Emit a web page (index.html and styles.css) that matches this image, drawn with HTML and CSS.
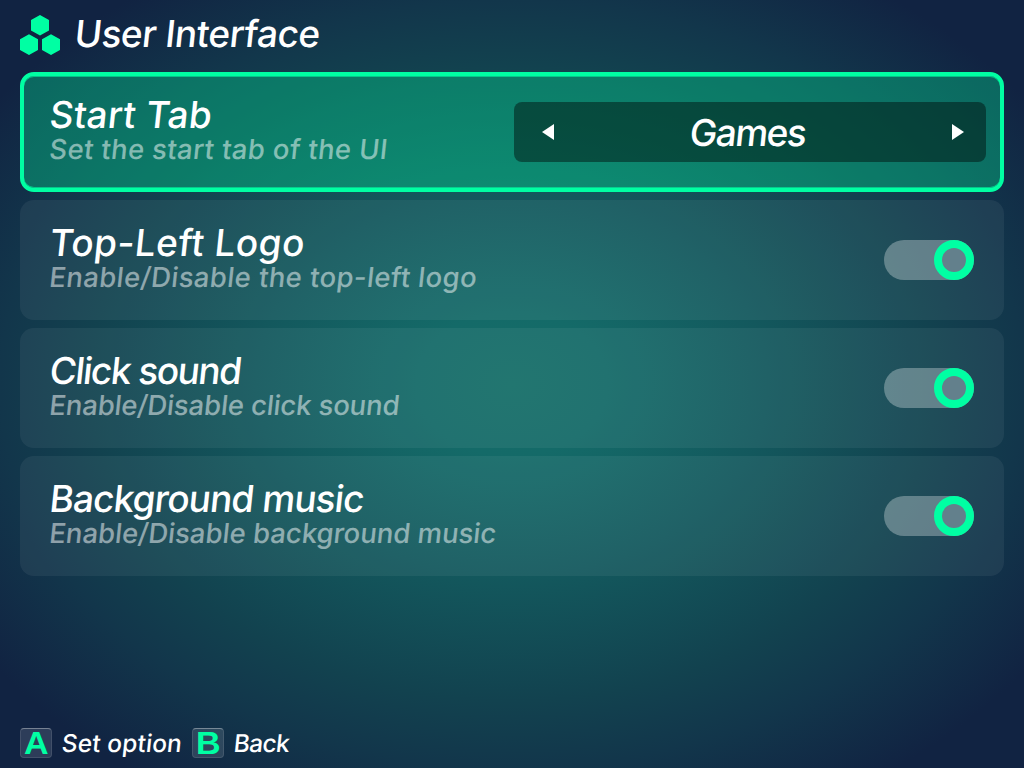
FILE: index.html
```html
<!DOCTYPE html>
<html lang="en">
<head>
<meta charset="utf-8">
<title>User Interface</title>
<link rel="stylesheet" href="styles.css">
</head>
<body>
<div class="screen">
  <header class="header">
    <svg class="logo" width="40" height="40" viewBox="0 0 40 40"><path d="M20 0l9 5v10.400l-9 5-9-5V5zM9 19.300l9 5v10.600l-9 5-9-5V24.300zM31 19.300l9 5v10.600l-9 5-9-5V24.300z"/></svg>
    <h1 class="title t-header">User Interface</h1>
  </header>
  <main class="list">
    <section class="row selected">
      <div class="copy"><h2 class="title t-start">Start Tab</h2><p class="desc d-start">Set the start tab of the UI</p></div>
      <div class="picker">
        <svg width="12" height="16" viewBox="0 0 12 16"><path d="M12 0v16L0 8z"/></svg>
        <span class="title t-games">Games</span>
        <svg width="12" height="16" viewBox="0 0 12 16"><path d="M0 0v16l12-8z"/></svg>
      </div>
    </section>
    <section class="row">
      <div class="copy"><h2 class="title t-logo">Top-Left Logo</h2><p class="desc d-logo">Enable/Disable the top-left logo</p></div>
      <div class="toggle"><i></i></div>
    </section>
    <section class="row">
      <div class="copy"><h2 class="title t-click">Click sound</h2><p class="desc d-click">Enable/Disable click sound</p></div>
      <div class="toggle"><i></i></div>
    </section>
    <section class="row">
      <div class="copy"><h2 class="title t-music">Background music</h2><p class="desc d-music">Enable/Disable background music</p></div>
      <div class="toggle"><i></i></div>
    </section>
  </main>
  <footer class="footer">
    <kbd class="key"><b>A</b></kbd><span class="hint h-set">Set option</span>
    <kbd class="key"><b>B</b></kbd><span class="hint h-back">Back</span>
  </footer>
</div>
</body>
</html>
```
FILE: styles.css
```css
* { box-sizing: border-box; margin: 0; padding: 0; }
body { font-family: Inter, "Liberation Sans", sans-serif; color: #fff; }
.screen {
  width: 1024px; height: 768px; padding: 0 20px; overflow: hidden;
  display: flex; flex-direction: column;
  background: radial-gradient(ellipse 640px 480px at 512px 384px, #156e68 0%, #146a68 15%, #13585d 40%, #12424f 66%, #12364b 80%, #112342 100%);
}
.header { height: 72px; padding-top: 15px; display: flex; gap: 13px; align-items: flex-start; }
.logo { fill: #00ffa3; }
.title { font-size: 37px; line-height: 36px; font-weight: 500; white-space: nowrap; transform: skewX(-6deg); transform-origin: left bottom; }
.t-header { letter-spacing: -.5px; line-height: 37px; }
.t-start { letter-spacing: .2px; }
.t-logo { letter-spacing: .4px; }
.t-click { letter-spacing: -1.500px; }
.t-music { letter-spacing: -.9px; }
.t-games { letter-spacing: -1.500px; padding-top: 2px; margin-right: 14px; }
.d-start { letter-spacing: .35px; }
.d-logo { letter-spacing: .4px; }
.d-click { letter-spacing: -.13px; }
.list { display: flex; flex-direction: column; gap: 8px; }
.row {
  height: 120px; padding: 0 30px 0 28px; border-radius: 14px;
  background: rgba(255, 255, 255, .06);
  display: flex; justify-content: space-between;
}
.copy { padding-top: 25px; display: flex; flex-direction: column; align-items: flex-start; }
.desc { margin-top: 1px; font-size: 27.500px; line-height: 30px; font-weight: 450; white-space: nowrap; color: rgba(255, 255, 255, .5); transform: skewX(-6deg); transform-origin: left bottom; }
.selected {
  background: rgba(0, 255, 163, .31); border: 4px solid #00ffa3; padding: 0 14px 0 24px;
  box-shadow: inset 0 1px rgba(0, 255, 163, .6), inset 0 -1px rgba(0, 255, 163, .6);
}
.selected .copy { padding-top: 21px; }
.picker {
  width: 472px; height: 60px; margin-top: 26px; padding: 0 22px 0 28px; border-radius: 8px;
  background: rgba(0, 0, 0, .42);
  display: flex; align-items: center; justify-content: space-between;
}
.picker svg { fill: #fff; }
.toggle { align-self: center; width: 90px; height: 40px; border-radius: 20px; background: rgba(255, 255, 255, .3); display: flex; justify-content: flex-end; }
.toggle i { width: 40px; height: 40px; border: 8px solid #00ffa3; border-radius: 50%; background: #63808c; }
.footer { margin-top: auto; height: 40px; display: flex; align-items: flex-start; }
.key {
  width: 32px; height: 30px; border-radius: 4px; border: 1px solid rgba(255, 255, 255, .1); border-top-color: rgba(255, 255, 255, .35);
  background: rgba(255, 255, 255, .12); color: #00ffa3;
  font: bold 31px/30px "Liberation Sans", sans-serif; display: flex; justify-content: center;
}
.key b { transform: scaleX(1.1); }
.hint { font-size: 24.500px; line-height: 31px; font-weight: 500; white-space: nowrap; transform: skewX(-6deg); margin-left: 10px; }
.h-set { width: 120px; margin-right: 10px; letter-spacing: .1px; }
.h-back { letter-spacing: -.7px; }
```
